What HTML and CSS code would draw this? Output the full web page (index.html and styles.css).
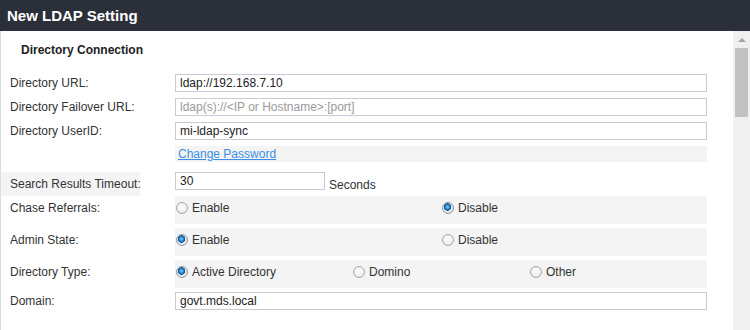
FILE: index.html
```html
<!DOCTYPE html>
<html>
<head>
<meta charset="utf-8">
<link rel="stylesheet" href="styles.css">
</head>
<body>
<div class="dialog">
  <div class="titlebar">New LDAP Setting</div>
  <div class="body">
    <div class="content">
      <div class="section">Directory Connection</div>
      <div class="form">
        <div class="label">Directory URL:</div>
        <div class="field"><input class="text" type="text" value="ldap://192.168.7.10"></div>

        <div class="label">Directory Failover URL:</div>
        <div class="field"><input class="text" type="text" placeholder="ldap(s)://<IP or Hostname>:[port]"></div>

        <div class="label">Directory UserID:</div>
        <div class="field"><input class="text" type="text" value="mi-ldap-sync"></div>

        <div class="label"></div>
        <div class="field linkrow"><a href="#" class="link">Change Password</a></div>

        <div class="label shaded timeout-label">Search Results Timeout:</div>
        <div class="field timeout"><input class="text short" type="text" value="30"><span class="unit">Seconds</span></div>

        <div class="label radio-label">Chase Referrals:</div>
        <div class="field radios two">
          <label class="opt"><input type="radio" name="cr"><span>Enable</span></label>
          <label class="opt"><input type="radio" name="cr" checked><span>Disable</span></label>
        </div>

        <div class="label radio-label">Admin State:</div>
        <div class="field radios two">
          <label class="opt"><input type="radio" name="as" checked><span>Enable</span></label>
          <label class="opt"><input type="radio" name="as"><span>Disable</span></label>
        </div>

        <div class="label radio-label last">Directory Type:</div>
        <div class="field radios three last">
          <label class="opt"><input type="radio" name="dt" checked><span>Active Directory</span></label>
          <label class="opt"><input type="radio" name="dt"><span>Domino</span></label>
          <label class="opt"><input type="radio" name="dt"><span>Other</span></label>
        </div>

        <div class="label">Domain:</div>
        <div class="field"><input class="text" type="text" value="govt.mds.local"></div>
      </div>
    </div>
    <div class="scrollbar">
      <div class="arrow"></div>
      <div class="thumb"></div>
    </div>
  </div>
</div>
</body>
</html>
```

FILE: styles.css
```css
html, body {
  margin: 0;
  padding: 0;
  background: #ffffff;
  overflow: hidden;
}

body {
  font-family: "Liberation Sans", Arial, sans-serif;
  font-size: 12px;
  color: #333333;
}

.dialog {
  width: 750px;
  height: 330px;
  display: flex;
  flex-direction: column;
}

.titlebar {
  height: 31px;
  flex: 0 0 31px;
  box-sizing: border-box;
  background: #2b2f39;
  color: #ffffff;
  font-weight: bold;
  font-size: 15px;
  line-height: 31px;
  padding-left: 7px;
}

.body {
  flex: 1;
  display: flex;
  border-left: 1px solid #dcdcdc;
  min-height: 0;
}

.content {
  flex: 1;
  padding-top: 11px;
}

.section {
  font-weight: bold;
  font-size: 12px;
  line-height: 16px;
  color: #222222;
  padding-left: 20px;
  margin-bottom: 16px;
}

.form {
  display: grid;
  grid-template-columns: 174px 532px;
  row-gap: 6px;
}

.label {
  padding-left: 9px;
  line-height: 18px;
  color: #333333;
  white-space: nowrap;
}

.field {
  display: flex;
  align-items: center;
}

.text {
  box-sizing: border-box;
  width: 532px;
  height: 18px;
  margin: 0;
  border: 1px solid #c9c9d9;
  padding: 0 4px;
  font-family: "Liberation Sans", Arial, sans-serif;
  font-size: 12px;
  color: #222222;
  background: #ffffff;
  outline: none;
}

.text::placeholder {
  color: #9a9a9a;
}

.linkrow {
  background: #f4f4f4;
  height: 16px;
  padding-left: 3px;
  margin-bottom: 4px;
}

.link {
  color: #3a8ee6;
  text-decoration: underline;
  line-height: 16px;
}

.shaded {
  background: #f4f4f4;
}

.timeout-label {
  line-height: 24px;
  height: 24px;
  margin-right: 35px;
}

.timeout {
  align-items: flex-start;
}

.text.short {
  width: 150px;
}

.unit {
  margin-left: 4px;
  margin-top: 5px;
  line-height: 16px;
}

.radios {
  background: #f4f4f4;
  height: 28px;
  align-items: flex-start;
  margin-top: -6px;
  margin-bottom: 4px;
}

.form .radio-label {
  line-height: 24px;
  margin-top: -6px;
}

.form .last {
  margin-bottom: -2px;
}

.radios.two .opt {
  width: 266px;
}

.radios.three .opt {
  width: 177px;
}

.opt {
  display: flex;
  align-items: center;
  height: 24px;
  line-height: 24px;
}

.opt input {
  -webkit-appearance: none;
  appearance: none;
  box-sizing: border-box;
  width: 12px;
  height: 12px;
  margin: 0 4px 0 1px;
  border-radius: 50%;
  border: 1px solid #a9a9a9;
  background: radial-gradient(circle at 50% 40%, #ffffff 0%, #f2f2f2 50%, #dcdcdc 100%);
}

.opt input:checked {
  border-color: #8a9aa8;
  background:
    radial-gradient(circle at 45% 40%, #8fd0ff 0px, #1a78c8 2.5px, #0b4f94 3.5px, transparent 4px),
    radial-gradient(circle, #f6f6f6 0%, #dcdcdc 100%);
}

.opt span {
  color: #333333;
}

.scrollbar {
  flex: 0 0 17px;
  width: 17px;
  background: #f0f0f0;
}

.arrow {
  width: 0;
  height: 0;
  margin: 7px auto 0;
  border-left: 4px solid transparent;
  border-right: 4px solid transparent;
  border-bottom: 4px solid #a3a3a3;
}

.thumb {
  margin: 6px 2px 0;
  height: 69px;
  background: #c1c1c1;
}
```
